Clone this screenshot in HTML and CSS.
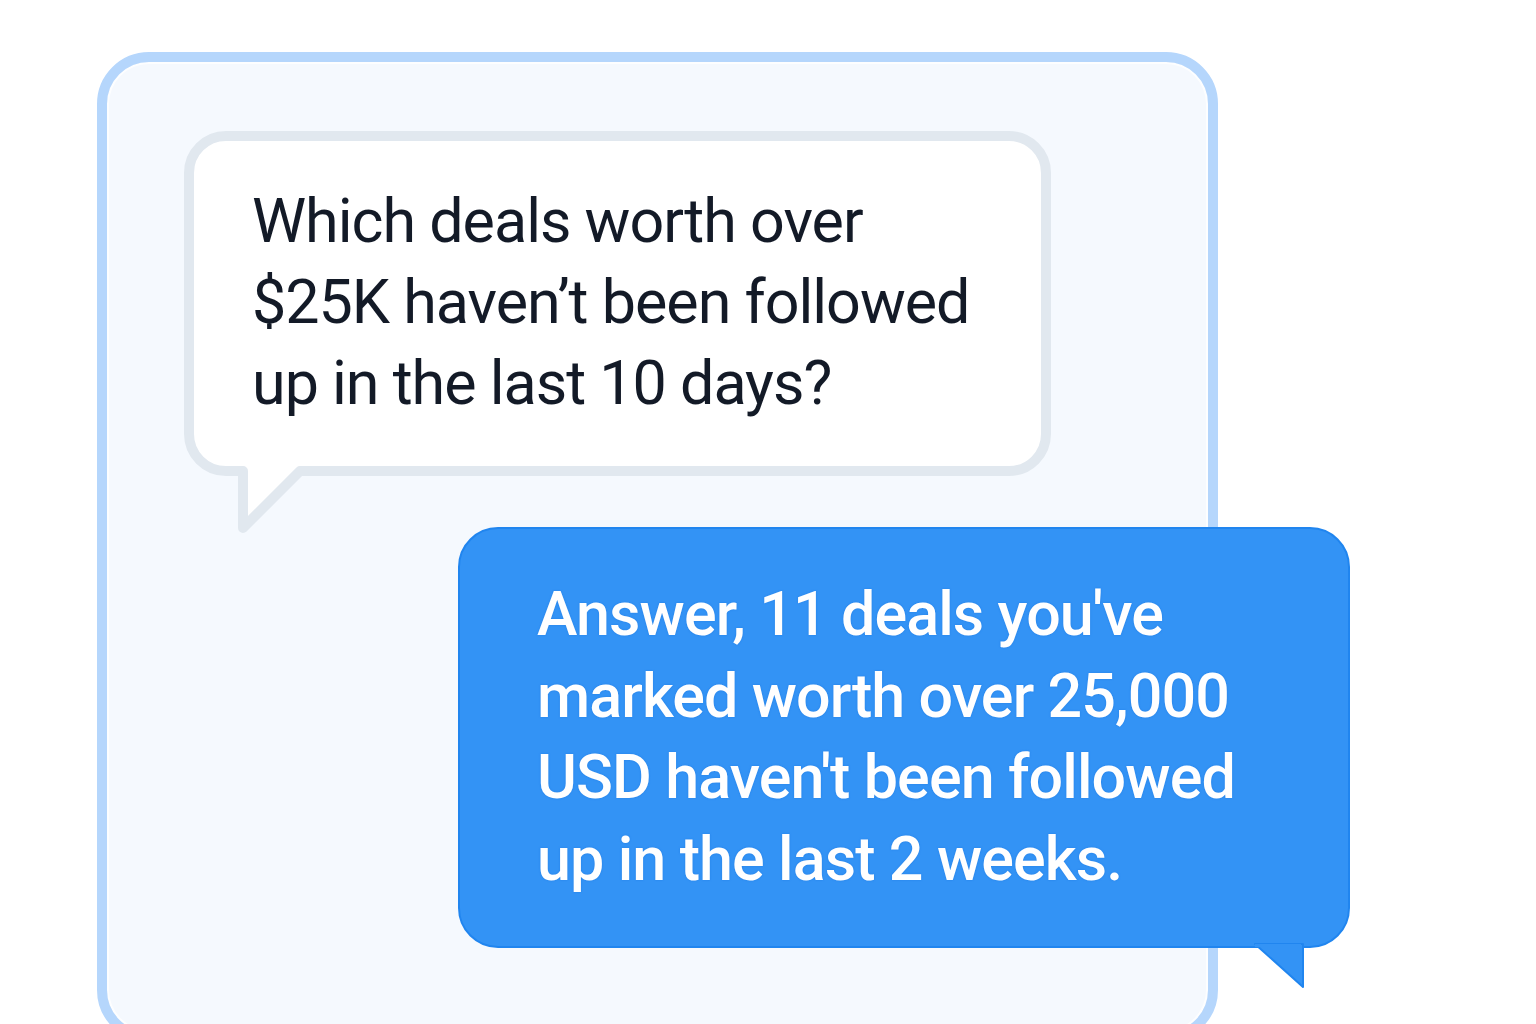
FILE: index.html
```html
<!DOCTYPE html>
<html lang="en">
<head>
<meta charset="utf-8">
<title>Deals follow-up chat</title>
<link rel="stylesheet" href="styles.css">
</head>
<body>
<main class="card">
  <div class="bubble bubble-question">
    <p class="question-text">Which deals worth over<br>$25K haven’t been followed<br>up in the last 10 days?</p>
    <svg class="tail tail-question" width="90" height="80" viewBox="0 0 90 80" aria-hidden="true">
      <path d="M5 0 L5 62 L67 0 Z" fill="#ffffff"/>
      <path d="M5 5 L5 62 L62 5 L70 5" fill="none" stroke="#e1e8ef" stroke-width="10" stroke-linejoin="round" stroke-linecap="round"/>
    </svg>
  </div>
  <div class="bubble bubble-answer">
    <p class="answer-text">Answer, 11 deals you've<br>marked worth over 25,000<br>USD haven't been followed<br>up in the last 2 weeks.</p>
    <svg class="tail tail-answer" width="52" height="48" viewBox="0 0 52 48" aria-hidden="true">
      <path d="M0 0 L48 0 L48 43 Z" fill="#3393f5" stroke="#2085ef" stroke-width="2" stroke-linejoin="round"/>
      <rect x="0" y="0" width="46" height="3" fill="#3393f5"/>
    </svg>
  </div>
</main>
</body>
</html>
```
FILE: styles.css
```css
html, body {
  margin: 0;
  padding: 0;
  background: #ffffff;
  overflow: hidden;
  height: 1024px;
}

body {
  font-family: "Roboto", "Inter", "Liberation Sans", sans-serif;
}

.card {
  box-sizing: border-box;
  margin: 52px 0 0 97px;
  width: 1121px;
  height: 990px;
  border: 10px solid #b5d6fc;
  border-radius: 52px;
  background: #f5f9fe;
  box-shadow: inset 0 0 0 2px rgba(255, 255, 255, 0.8);
  padding: 69px 0 0 77px;
}

.bubble {
  position: relative;
  box-sizing: border-box;
}

.bubble-question {
  width: 867px;
  background: #ffffff;
  border: 10px solid #e1e8ef;
  border-radius: 42px;
  padding: 40px 20px 42px 58px;
}

.question-text {
  margin: 0;
  font-size: 61px;
  line-height: 81px;
  color: #131a27;
  letter-spacing: -1px;
  white-space: nowrap;
}

.tail {
  position: absolute;
  overflow: visible;
}

.tail-question {
  left: 44px;
  top: 100%;
}

.bubble-answer {
  width: 892px;
  margin: 51px 0 0 274px;
  background: #3393f5;
  border: 2px solid #2085ef;
  border-radius: 40px;
  padding: 45px 20px 46px 77px;
}

.answer-text {
  margin: 0;
  font-size: 61px;
  font-weight: 500;
  line-height: 81.5px;
  color: #ffffff;
  letter-spacing: -0.9px;
  white-space: nowrap;
  text-shadow: 0 0 2px rgba(20, 110, 220, 0.6);
}

.tail-answer {
  left: 795px;
  top: 100%;
  margin-top: -2px;
}
```
